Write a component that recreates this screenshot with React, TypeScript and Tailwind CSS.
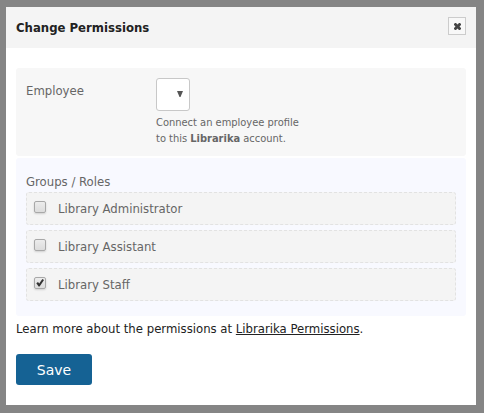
import { useState } from "react";

const roles = ["Library Administrator", "Library Assistant", "Library Staff"];

function RoleOption({ name, defaultChecked }: { name: string; defaultChecked: boolean }) {
  const [checked, setChecked] = useState(defaultChecked);
  return (
    <label className="flex h-[33px] items-center rounded-[3px] border border-dashed border-[#e2e2e2] bg-[#f4f4f4] pl-[7px]">
      <span className="relative mr-3 mb-[3px] block size-3">
        <input
          type="checkbox"
          checked={checked}
          onChange={(e) => setChecked(e.target.checked)}
          className="block size-3 appearance-none rounded-[2px] border border-[#a8a8a8] bg-linear-to-b from-[#ececec] to-[#dcdcdc] shadow-[0_1px_2px_rgba(0,0,0,0.15)]"
        />
        {checked && (
          <svg viewBox="0 0 12 12" className="pointer-events-none absolute inset-0 size-3" aria-hidden="true">
            <path d="M2.3 6.3 L4 5 L5.2 6.6 L8.4 2 L10 3.1 L5.6 9.6 L4.6 9.6 Z" fill="#333" />
          </svg>
        )}
      </span>
      {name}
    </label>
  );
}

export default function App() {
  return (
    <div className="min-h-screen bg-[#858585] pt-[7px] pr-2 pb-2 pl-[6px] font-['DejaVu_Sans_Condensed','DejaVu_Sans',sans-serif] text-[13px] leading-5 text-[#666]">
      <div role="dialog" aria-labelledby="title" className="bg-white pb-5">
        <header className="flex h-[41px] items-center justify-between bg-[#f4f4f4] px-[10px]">
          <h1 id="title" className="text-[13px] font-bold text-[#222]">Change Permissions</h1>
          <button type="button" aria-label="Close" className="mb-[3px] flex size-[18px] items-center justify-center border border-[#ccc] bg-[#f8f8f8]">
            <svg viewBox="0 0 7 7" className="size-[7px]" aria-hidden="true">
              <path d="M0 1 L1 0 H2 L3.5 1.5 L5 0 H6 L7 1 V2 L5.5 3.5 L7 5 V6 L6 7 H5 L3.5 5.5 L2 7 H1 L0 6 V5 L1.5 3.5 L0 2 Z" fill="#444" />
            </svg>
          </button>
        </header>
        <form className="px-[10px] pt-5" onSubmit={(e) => e.preventDefault()}>
          <div className="flex rounded-[3px] bg-[#f7f7f7] px-[10px] pt-[10px] pb-[9px]">
            <label htmlFor="employee" className="w-[130px] pt-[3px]">Employee</label>
            <div>
              <div className="relative w-[34px]">
                <select id="employee" className="block h-[33px] w-full appearance-none rounded-[3px] border border-[#c8c8c8] bg-white">
                  <option value=""></option>
                </select>
                <svg viewBox="0 0 6 6" className="pointer-events-none absolute top-[13px] right-[7px] size-[6px]" aria-hidden="true">
                  <path d="M0 0 H6 L3.5 6 H2.5 Z" fill="#555" />
                </svg>
              </div>
              <p className="pt-1 text-[11px] leading-4">
                Connect an employee profile
                <br />
                to this <b>Librarika</b> account.
              </p>
            </div>
          </div>
          <fieldset className="mt-[2px] rounded-[3px] bg-[#f8f9ff] px-[10px] pt-[14px] pb-[15px]">
            <legend className="float-left h-5 w-full">Groups / Roles</legend>
            <div className="clear-both flex flex-col gap-[5px]">
              {roles.map((name) => (
                <RoleOption key={name} name={name} defaultChecked={name === "Library Staff"} />
              ))}
            </div>
          </fieldset>
          <p className="pt-[3px] text-[#222]">
            Learn more about the permissions at{" "}
            <a href="#permissions" className="underline">Librarika Permissions</a>.
          </p>
          <button type="submit" className="mt-[15px] block h-[31px] w-[76px] rounded-[3px] bg-[#156294] font-['DejaVu_Sans',sans-serif] text-[14px] text-white">
            Save
          </button>
        </form>
      </div>
    </div>
  );
}
